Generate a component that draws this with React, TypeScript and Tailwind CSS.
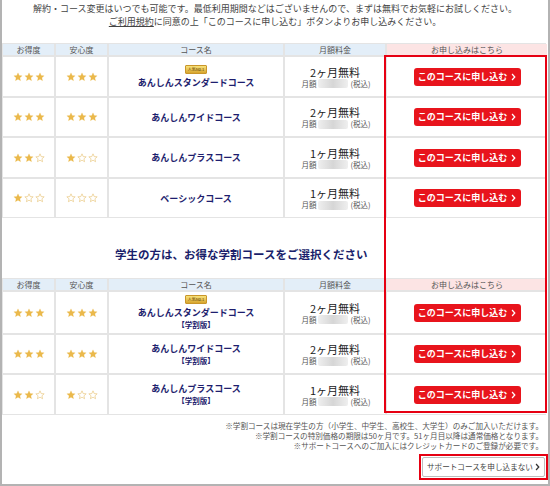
import React from 'react';

type Course = {
  value: number;
  safety: number;
  name: string;
  popular?: boolean;
  student?: boolean;
  free: string;
  h: string;
};

const mainCourses: Course[] = [
  { value: 3, safety: 3, name: 'あんしんスタンダードコース', popular: true, free: '2ヶ月無料', h: 'h-[39px]' },
  { value: 3, safety: 3, name: 'あんしんワイドコース', free: '2ヶ月無料', h: 'h-[38px]' },
  { value: 2, safety: 1, name: 'あんしんプラスコース', free: '1ヶ月無料', h: 'h-[39px]' },
  { value: 1, safety: 0, name: 'ベーシックコース', free: '1ヶ月無料', h: 'h-[38px]' },
];

const studentCourses: Course[] = [
  { value: 3, safety: 3, name: 'あんしんスタンダードコース', popular: true, student: true, free: '2ヶ月無料', h: 'h-[41px]' },
  { value: 3, safety: 3, name: 'あんしんワイドコース', student: true, free: '2ヶ月無料', h: 'h-[38px]' },
  { value: 2, safety: 1, name: 'あんしんプラスコース', student: true, free: '1ヶ月無料', h: 'h-[39px]' },
];

const Star = ({ filled }: { filled: boolean }) => (
  <svg viewBox="0 0 24 24" className="w-[10px] h-[10px]">
    <path
      d="M12 2l2.9 6.6 7.1.6-5.4 4.7 1.6 7-6.2-3.7-6.2 3.7 1.6-7L2 9.2l7.1-.6z"
      fill={filled ? '#ebb94c' : '#ffffff'}
      stroke={filled ? '#ebb94c' : '#e8c67c'}
      strokeWidth={filled ? 0.5 : 1.6}
      strokeLinejoin="round"
    />
  </svg>
);

const Stars = ({ n }: { n: number }) => (
  <div className="flex items-center gap-[1px]">
    {[0, 1, 2].map((i) => (
      <Star key={i} filled={i < n} />
    ))}
  </div>
);

const Chevron = ({ color }: { color: string }) => (
  <svg viewBox="0 0 6 10" className="w-[5px] h-[8px] shrink-0">
    <path d="M1.2 1.2 4.6 5 1.2 8.8" fill="none" stroke={color} strokeWidth="1.6" />
  </svg>
);

const Header = () => (
  <>
    {['お得度', '安心度', 'コース名', '月額料金'].map((t) => (
      <div key={t} className="h-[11px] bg-[#e3eef8] text-[8px] leading-[11px] text-[#555] text-center">
        {t}
      </div>
    ))}
    <div className="h-[11px] bg-[#fce4e4] text-[8px] leading-[11px] text-[#555] text-center">お申し込みはこちら</div>
  </>
);

const Row = ({ c }: { c: Course }) => (
  <>
    <div className={`${c.h} bg-white flex items-center justify-center`}>
      <Stars n={c.value} />
    </div>
    <div className={`${c.h} bg-white flex items-center justify-center`}>
      <Stars n={c.safety} />
    </div>
    <div className={`${c.h} bg-white flex flex-col items-center justify-center`}>
      {c.popular && (
        <div className="w-[22px] h-[9px] mb-[2px] rounded-[1px] bg-gradient-to-b from-[#f8e27a] to-[#d7a52a] border border-[#c9962a] flex items-center justify-center">
          <span className="text-[4px] leading-none text-[#5a3b00]">人気No.1</span>
        </div>
      )}
      <span className="text-[9px] leading-[13px] font-bold text-[#1e1e6e]">{c.name}</span>
      {c.student && <span className="text-[7.5px] leading-[12px] font-bold text-[#1e1e6e]">【学割版】</span>}
    </div>
    <div className={`${c.h} bg-white flex flex-col items-center justify-center`}>
      <span className="text-[11px] leading-[14px] text-[#222]">{c.free}</span>
      <div className="flex items-center text-[7.5px] leading-[10px] text-[#555] pl-[2px]">
        <span>月額</span>
        <span className="w-[30px] h-[9px] mx-[2px] bg-gradient-to-r from-[#efefef] via-[#d6d6d6] to-[#efefef] rounded-[2px] blur-[0.5px]"></span>
        <span>(税込)</span>
      </div>
    </div>
    <div className={`${c.h} bg-white flex items-center justify-center`}>
      <button className="w-[107px] h-[18px] rounded-[3px] bg-[#e8141c] text-white text-[9px] font-bold flex items-center justify-center gap-[4px] whitespace-nowrap">
        このコースに申し込む
        <Chevron color="#ffffff" />
      </button>
    </div>
  </>
);

const CourseTable = ({ courses }: { courses: Course[] }) => (
  <div className="w-[544px] grid grid-cols-[51px_51px_174px_100px_160px] gap-[2px] bg-[#e4e4e4] border border-[#e4e4e4]">
    <Header />
    {courses.map((c, i) => (
      <Row key={i} c={c} />
    ))}
  </div>
);

export default function App() {
  return (
    <div className="relative w-[550px] h-[486px] bg-white border-l-2 border-r-2 border-b-2 border-[#b3b3b3] font-['Noto_Sans_CJK_JP','Noto_Sans',sans-serif]">
      {/* intro */}
      <div className="h-[43px] pt-[2px] text-center text-[9px] leading-[13px] text-[#444]">
        <p>解約・コース変更はいつでも可能です。最低利用期間などはございませんので、まずは無料でお気軽にお試しください。</p>
        <p>
          <span className="underline">ご利用規約</span>に同意の上「このコースに申し込む」ボタンよりお申し込みください。
        </p>
      </div>

      <CourseTable courses={mainCourses} />

      <div className="h-[60px] pt-[29px] pl-[113px] text-[11.5px] leading-[14px] font-bold text-[#1b1f6b]">
        学生の方は、お得な学割コースをご選択ください
      </div>

      <CourseTable courses={studentCourses} />

      {/* notes */}
      <div className="pt-[6px] pr-[5px] text-right text-[7.6px] leading-[10px] text-[#555]">
        <p>※学割コースは現在学生の方（小学生、中学生、高校生、大学生）のみご加入いただけます。</p>
        <p>※学割コースの特別価格の期限は50ヶ月です。51ヶ月目以降は通常価格となります。</p>
        <p>※サポートコースへのご加入にはクレジットカードのご登録が必要です。</p>
      </div>

      <div className="flex justify-end mt-[3px]">
        <div className="border-2 border-[#e60012] p-[1px]">
          <button className="w-[123px] h-[20px] border border-[#bdbdbd] rounded-[2px] bg-white flex items-center justify-between pl-[4px] pr-[4px] text-[7.6px] text-[#444] whitespace-nowrap">
            サポートコースを申し込まない
            <Chevron color="#333333" />
          </button>
        </div>
      </div>

      {/* highlight frame over the apply column */}
      <div className="absolute left-[382px] top-[55px] w-[163px] h-[358px] border-2 border-[#e60012] pointer-events-none"></div>
    </div>
  );
}
